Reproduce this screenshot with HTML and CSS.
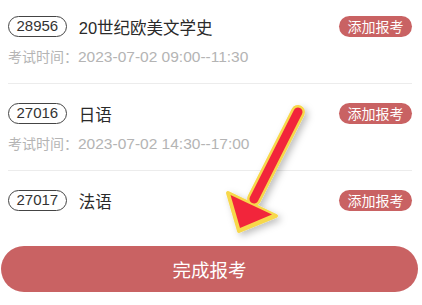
FILE: index.html
```html
<!DOCTYPE html>
<html lang="zh-CN">
<head>
<meta charset="utf-8">
<title>添加报考</title>
<link rel="stylesheet" href="styles.css">
</head>
<body>
<div class="page">
  <div class="list">
    <div class="item">
      <div class="head">
        <span class="code">28956</span>
        <span class="name">20世纪欧美文学史</span>
        <span class="add">添加报考</span>
      </div>
      <div class="time">考试时间：<span class="time-val">2023-07-02 09:00--11:30</span></div>
    </div>
    <div class="item">
      <div class="head">
        <span class="code">27016</span>
        <span class="name">日语</span>
        <span class="add">添加报考</span>
      </div>
      <div class="time">考试时间：<span class="time-val">2023-07-02 14:30--17:00</span></div>
    </div>
    <div class="item last">
      <div class="head">
        <span class="code">27017</span>
        <span class="name">法语</span>
        <span class="add">添加报考</span>
      </div>
    </div>
  </div>
  <div class="footer">
    <button class="submit">完成报考</button>
  </div>
  <svg class="arrow" width="422" height="305" viewBox="0 0 422 305">
    <defs>
      <filter id="sh" x="-50%" y="-50%" width="200%" height="200%">
        <feDropShadow dx="3" dy="3" stdDeviation="3.5" flood-color="#000" flood-opacity="0.25"/>
      </filter>
    </defs>
    <g filter="url(#sh)">
      <line x1="298" y1="112" x2="254" y2="199" stroke="#f7d84c" stroke-width="14" stroke-linecap="round"/>
      <polygon points="228,193 276,216 239,231" fill="#f7d84c" stroke="#f7d84c" stroke-width="4" stroke-linejoin="round"/>
    </g>
    <line x1="298" y1="112" x2="254" y2="199" stroke="#f2253b" stroke-width="9" stroke-linecap="round"/>
    <polygon points="230.5,195 272,214.5 240,228" fill="#f2253b"/>
  </svg>
</div>
</body>
</html>
```

FILE: styles.css
```css
* { box-sizing: border-box; }
html, body {
  margin: 0;
  padding: 0;
  background: #fff;
}
body {
  font-family: "Liberation Sans", "Noto Sans CJK SC", sans-serif;
  width: 422px;
  height: 305px;
  overflow: hidden;
}
.page {
  position: relative;
  width: 422px;
  height: 305px;
}
.list {
  padding: 0 10px 0 8px;
}
.item {
  padding: 19px 0 16px;
  border-bottom: 1px solid #ececec;
}
.item:first-child {
  padding-top: 16px;
}
.item.last {
  border-bottom: none;
  padding-bottom: 0;
}
.head {
  display: flex;
  align-items: center;
  height: 21px;
}
.code {
  height: 21px;
  padding: 0 7.5px;
  border: 1.2px solid #444;
  border-radius: 11px;
  font-size: 15px;
  line-height: 18.6px;
  color: #333;
}
.name {
  margin-left: 12px;
  font-size: 16.5px;
  color: #2a2a2a;
  flex: 1;
}
.add {
  height: 21px;
  padding: 0 8.5px;
  border-radius: 11px;
  background: #c96263;
  color: #fff;
  font-family: "Noto Sans CJK SC", sans-serif;
  font-size: 14px;
  line-height: 21px;
}
.time {
  margin-top: 10px;
  height: 20px;
  line-height: 20px;
  font-size: 14px;
  color: #b4b4b4;
}
.time-val {
  font-size: 15.5px;
}
.footer {
  padding: 35px 4px 0 1px;
}
.submit {
  display: block;
  width: 100%;
  height: 46px;
  border: none;
  border-radius: 23px;
  background: #c96263;
  color: #fff;
  font-family: "Noto Sans CJK SC", sans-serif;
  font-size: 18.5px;
  padding: 0;
}
.arrow {
  position: absolute;
  left: 0;
  top: 0;
  pointer-events: none;
}
```
